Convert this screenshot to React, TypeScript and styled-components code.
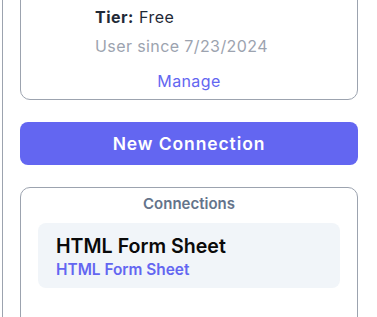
import React from "react";
import styled, {createGlobalStyle} from "styled-components";

const GlobalStyle = createGlobalStyle`
  html, body {
    margin: 0;
    padding: 0;
    background: #ffffff;
    overflow: hidden;
  }

  body {
    font-family: Inter, "Liberation Sans", sans-serif;
  }
`;

const Sidebar = styled.aside`
  margin-left: 2px;
  border-left: 1px solid #9ca3af;
  padding: 0 19px 0 17px;
  height: 317px;
  display: flex;
  flex-direction: column;
  gap: 22px;
  box-sizing: border-box;
  overflow: hidden;
`;

const Card = styled.section`
  border: 1px solid #9ca3af;
  border-radius: 10px;
  background: #ffffff;
`;

const AccountCard = styled(Card)`
  margin-top: -20px;
  padding: 24px 16px 6px 74px;
  display: flex;
  flex-direction: column;
`;

const Line = styled.div<{ $muted?: boolean }>`
  font-size: 16px;
  line-height: 24px;
  color: ${p => p.$muted ? "#9ca3af" : "#1f2937"};
  letter-spacing: ${p => p.$muted ? "0.4px" : "0.5px"};
  & + & {
    margin-top: 5px;
  }

  b {
    font-weight: 700;
  }
`;

const ManageLink = styled.a`
  align-self: center;
  margin: 11px 0 0 -58px;
  font-size: 16px;
  line-height: 24px;
  color: #6366f1;
  letter-spacing: 0.4px;
  text-decoration: none;
  cursor: pointer;
`;

const PrimaryButton = styled.button`
  flex: none;
  height: 43px;
  border: none;
  border-radius: 8px;
  background: #6366f1;
  color: #ffffff;
  font-family: inherit;
  font-size: 17.5px;
  font-weight: 600;
  letter-spacing: 0.9px;
  cursor: pointer;
`;

const ConnectionsCard = styled(Card)`
  flex: none;
  min-height: 200px;
  padding: 6px 17px 0 17px;
`;

const CardTitle = styled.h2`
  margin: 0;
  text-align: center;
  font-size: 15px;
  line-height: 20px;
  font-weight: 600;
  color: #64748b;
`;

const ConnectionItem = styled.div`
  margin-top: 9px;
  padding: 9px 18px 8px;
  background: #f1f5f9;
  border-radius: 8px;
`;

const ItemName = styled.div`
  font-size: 19.6px;
  line-height: 28px;
  font-weight: 600;
  color: #0a0a0a;
`;

const ItemType = styled.div`
  font-size: 15.4px;
  line-height: 20px;
  font-weight: 600;
  color: #6366f1;
`;

const connections = [
    {name: "HTML Form Sheet", type: "HTML Form Sheet"},
];

export default function App() {
    return (
        <>
            <GlobalStyle/>
            <Sidebar>
                <AccountCard>
                    <Line><b>Tier:</b> Free</Line>
                    <Line $muted>User since 7/23/2024</Line>
                    <ManageLink>Manage</ManageLink>
                </AccountCard>
                <PrimaryButton>New Connection</PrimaryButton>
                <ConnectionsCard>
                    <CardTitle>Connections</CardTitle>
                    {connections.map(c => (
                        <ConnectionItem key={c.name}>
                            <ItemName>{c.name}</ItemName>
                            <ItemType>{c.type}</ItemType>
                        </ConnectionItem>
                    ))}
                </ConnectionsCard>
            </Sidebar>
        </>
    );
}
